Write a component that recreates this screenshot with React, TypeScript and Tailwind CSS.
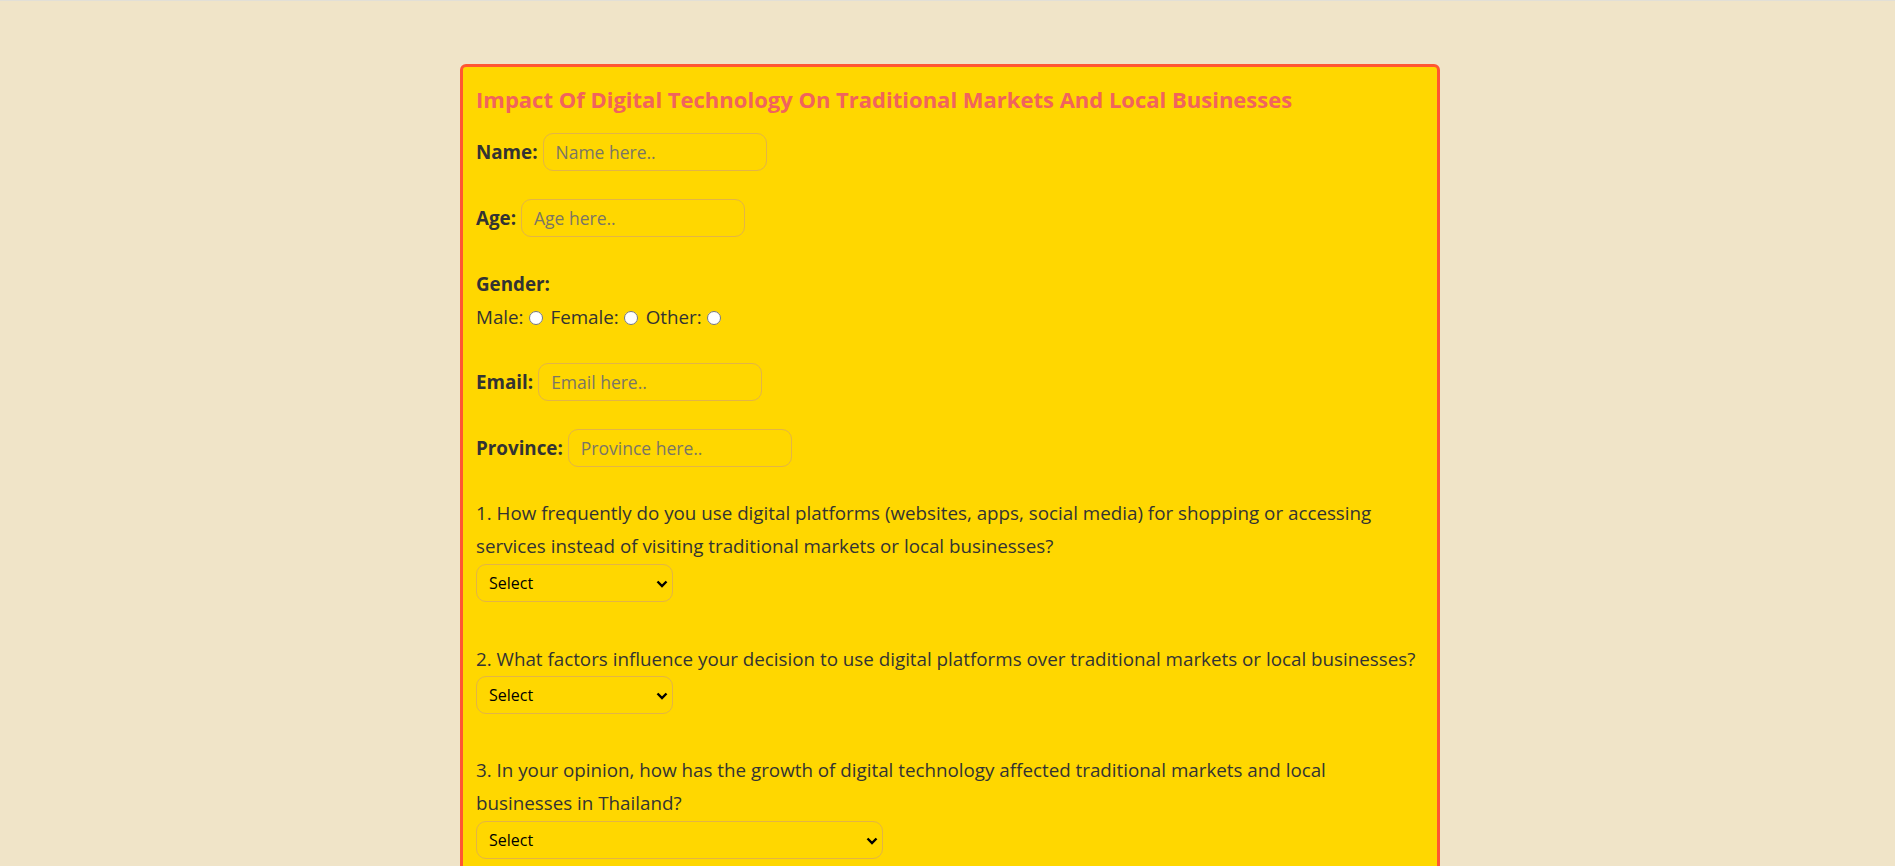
const field =
  "h-[38px] w-[224px] rounded-[10px] border border-[#e3b446] bg-transparent pl-[12px] text-[17.5px] text-[#333] outline-none placeholder:text-[#7a7566]";

const TextRow = ({ label, placeholder, mt }: { label: string; placeholder: string; mt: string }) => (
  <div className={`flex h-[38px] items-center ${mt}`}>
    <label className="font-bold">{label}</label>
    <input type="text" placeholder={placeholder} className={`ml-[5px] ${field}`} />
  </div>
);

const Dropdown = ({ wide }: { wide?: boolean }) => (
  <div className={`relative h-[38px] ${wide ? "w-[407px]" : "w-[197px]"}`}>
    <select className="h-full w-full appearance-none rounded-[10px] border border-[#e3b446] bg-transparent pl-[12px] text-[16px] text-black outline-none">
      <option>Select</option>
      <option>Daily</option>
      <option>Weekly</option>
      <option>Monthly</option>
      <option>Rarely</option>
    </select>
    <svg
      className="pointer-events-none absolute right-[5px] top-[16px]"
      width="12"
      height="8"
      viewBox="0 0 12 8"
      fill="none"
      stroke="black"
      strokeWidth="2.4"
    >
      <polyline points="1.5,1.5 6,6 10.5,1.5" />
    </svg>
  </div>
);

const Radio = ({ label }: { label: string }) => (
  <>
    {label}
    <input type="radio" name="gender" className="ml-[5px] mr-[3px] h-[14px] w-[14px] align-[-1px]" />{" "}
  </>
);

export default function App() {
  return (
    <div
      className="min-h-screen border-t border-[#e2dfd7] bg-[#f0e4c8] pl-[5px] pt-[63px] text-[18.8px] leading-[33px] text-[#333]"
      style={{ fontFamily: '"Open Sans", "Noto Sans", sans-serif' }}
    >
      <form className="mx-auto w-[980px] rounded-[6px] border-[3px] border-[#ff5733] bg-[#ffd700] px-[13px] pb-[20px] pt-[16px]">
        <h1 className="text-[22px] font-bold leading-[33px] text-[#f1635d]">
          Impact Of Digital Technology On Traditional Markets And Local Businesses
        </h1>

        <TextRow label="Name:" placeholder="Name here.." mt="mt-[17px]" />
        <TextRow label="Age:" placeholder="Age here.." mt="mt-[28px]" />

        <div className="mt-[31px]">
          <p className="font-bold">Gender:</p>
          <p>
            <Radio label="Male:" />
            <Radio label="Female:" />
            <Radio label="Other:" />
          </p>
        </div>

        <TextRow label="Email:" placeholder="Email here.." mt="mt-[29px]" />
        <TextRow label="Province:" placeholder="Province here.." mt="mt-[28px]" />

        <div className="mt-[30px]">
          <p>
            1. How frequently do you use digital platforms (websites, apps, social media) for shopping or accessing
            services instead of visiting traditional markets or local businesses?
          </p>
          <div className="mt-[1px]">
            <Dropdown />
          </div>
        </div>

        <div className="mt-[41px]">
          <p>2. What factors influence your decision to use digital platforms over traditional markets or local businesses?</p>
          <Dropdown />
        </div>

        <div className="mt-[40px]">
          <p>
            3. In your opinion, how has the growth of digital technology affected traditional markets and local
            businesses in Thailand?
          </p>
          <div className="mt-[1px]">
            <Dropdown wide />
          </div>
        </div>
      </form>
    </div>
  );
}
